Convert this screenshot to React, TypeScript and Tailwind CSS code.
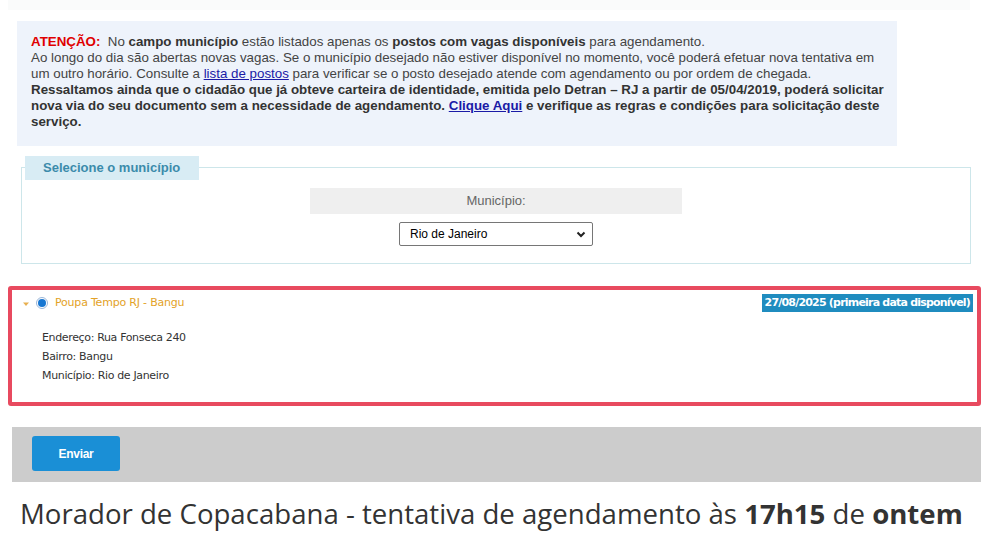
import React from 'react';

const infoRows = ['Endereço: Rua Fonseca 240', 'Bairro: Bangu', 'Município: Rio de Janeiro'];

const App: React.FC = () => {
  return (
    <div className="w-[984px] h-[542px] bg-white overflow-hidden relative">
      <div className="h-[10px] ml-[8px] mr-[14px] bg-[#fafbfb]" />

      {/* aviso */}
      <div className="mt-[11px] ml-[17px] w-[880px] h-[125px] bg-[#eef3fb] pl-[14px] pr-[10px] pt-[13px] font-['Liberation_Sans',Arial,sans-serif] text-[13.33px] leading-[16px] text-[#444]">
        <p>
          <span className="text-[#e00000] font-bold">ATENÇÃO:</span>&nbsp; No <b className="text-[#333]">campo município</b> estão listados apenas os{' '}
          <b className="text-[#333]">postos com vagas disponíveis</b> para agendamento.
          <br />
          Ao longo do dia são abertas novas vagas. Se o município desejado não estiver disponível no momento, você poderá efetuar nova tentativa em
          um outro horário. Consulte a <a className="text-[#1a1aa6] underline">lista de postos</a> para verificar se o posto desejado atende com
          agendamento ou por ordem de chegada.
          <br />
          <b className="text-[#333]">
            Ressaltamos ainda que o cidadão que já obteve carteira de identidade, emitida pelo Detran – RJ a partir de 05/04/2019, poderá solicitar
            nova via do seu documento sem a necessidade de agendamento. <a className="text-[#1a1aa6] underline">Clique Aqui</a> e verifique as
            regras e condições para solicitação deste serviço.
          </b>
        </p>
      </div>

      {/* município */}
      <div className="relative mt-[21px] ml-[21px] w-[950px] h-[97px] border border-[#cde6ea] bg-white font-['Liberation_Sans',Arial,sans-serif] text-[13px]">
        <div className="absolute left-[3px] top-[-12px] w-[174px] h-[24px] bg-[#d8ecf4] flex items-center pl-[18px] font-bold text-[#3b8bab]">
          Selecione o município
        </div>
        <div className="flex flex-col items-center pt-[20px]">
          <div className="w-[372px] h-[26px] bg-[#efefef] flex items-center justify-center text-[#666]">Município:</div>
          <div className="mt-[8px] w-[194px] h-[24px] border border-[#767676] rounded-[2px] bg-white flex items-center justify-between pl-[10px] pr-[5px] text-[12px] text-black">
            <span>Rio de Janeiro</span>
            <svg width="12" height="12" viewBox="0 0 12 12">
              <path d="M2.5 4.5 L6 8 L9.5 4.5" stroke="#222" strokeWidth="2" fill="none" />
            </svg>
          </div>
        </div>
      </div>

      {/* posto */}
      <div className="mt-[22px] ml-[8px] w-[973px] h-[120px] border-[4px] border-[#e84a5f] rounded-[3px] bg-white px-[9px] pt-[4px] font-['DejaVu_Sans',Tahoma,sans-serif] text-[11px]">
        <div className="flex items-start justify-between">
          <div className="flex items-center h-[18px] text-[#e3a227]">
            <svg width="8" height="8" viewBox="0 0 8 8" className="ml-[1px] mt-[1px]">
              <path d="M1 2.5 L7 2.5 L4 6 Z" fill="#e8b050" />
            </svg>
            <span className="ml-[6px] w-[12px] h-[12px] rounded-full border border-[#9bb7d9] bg-white flex items-center justify-center">
              <span className="w-[8px] h-[8px] rounded-full bg-[#1877d2]" />
            </span>
            <span className="ml-[7px] tracking-[-0.2px]">Poupa Tempo RJ - Bangu</span>
          </div>
          <div className="mr-[-5px] h-[18px] px-[3px] bg-[#1f8cbf] text-white font-bold flex items-center tracking-[-0.8px]">
            27/08/2025 (primeira data disponível)
          </div>
        </div>
        <div className="mt-[16px] pl-[21px] text-[#333] leading-[19px] tracking-[-0.35px]">
          {infoRows.map((r, i) => (
            <div key={i}>{r}</div>
          ))}
        </div>
      </div>

      {/* enviar */}
      <div className="mt-[21px] ml-[12px] w-[969px] h-[55px] bg-[#cccccc] pl-[20px] pt-[9px]">
        <button className="w-[88px] h-[35px] rounded-[3px] bg-[#1a8fd6] text-white font-bold text-[12px] font-['Liberation_Sans_Narrow','Liberation_Sans',sans-serif] tracking-[-0.3px]">
          Enviar
        </button>
      </div>

      <div className="mt-[13px] ml-[20px] font-['Open_Sans',sans-serif] text-[27.6px] leading-[36px] text-[#333] whitespace-nowrap">
        Morador de Copacabana - tentativa de agendamento às <b>17h15</b> de <b>ontem</b>
      </div>
    </div>
  );
};

export default App;
